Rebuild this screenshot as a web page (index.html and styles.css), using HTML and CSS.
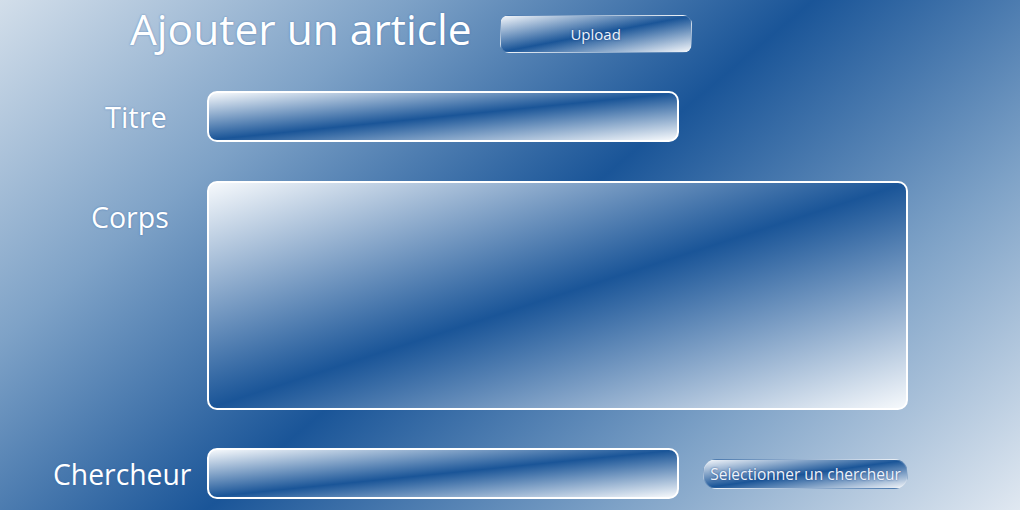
FILE: index.html
```html
<!DOCTYPE html>
<html lang="fr">
<head>
<meta charset="utf-8">
<title>Ajouter un article</title>
<link rel="stylesheet" href="styles.css">
</head>
<body>
<main class="page">
  <header class="header">
    <h1 class="title">Ajouter un article</h1>
    <button class="glass-btn upload-btn" type="button">Upload</button>
  </header>
  <form class="form">
    <div class="row row-titre">
      <label class="label label-titre" for="titre">Titre</label>
      <input class="field field-line" id="titre" type="text">
    </div>
    <div class="row row-corps">
      <label class="label label-corps" for="corps">Corps</label>
      <textarea class="field field-area" id="corps"></textarea>
    </div>
    <div class="row row-chercheur">
      <label class="label label-chercheur" for="chercheur">Chercheur</label>
      <input class="field field-line" id="chercheur" type="text">
      <button class="glass-btn select-btn" type="button">Selectionner un chercheur</button>
    </div>
  </form>
</main>
</body>
</html>
```

FILE: styles.css
```css
* { box-sizing: border-box; }

html, body {
  margin: 0;
  padding: 0;
  width: 1020px;
  height: 510px;
  overflow: hidden;
}

body {
  font-family: "Open Sans", "DejaVu Sans", sans-serif;
  color: #ffffff;
  background: linear-gradient(140deg, #d2deea 0%, #7ea2c7 25%, #1a5598 50%, #7ea2c7 75%, #e0e8f1 100%);
}

.page {
  display: flex;
  flex-direction: column;
  height: 510px;
}

.header {
  display: flex;
  align-items: flex-start;
  height: 91px;
  padding-left: 130px;
}

.title {
  margin: 0;
  font-weight: 400;
  font-size: 42.5px;
  line-height: 58px;
  text-shadow: 0 0 2px rgba(40, 90, 160, 0.6);
}

.glass-btn {
  font-family: "Open Sans", "DejaVu Sans", sans-serif;
  color: #eef3fa;
  border: 1px solid rgba(255, 255, 255, 0.2);
  background: linear-gradient(to bottom right, #f4f7fb 0%, #1a5598 50%, #f4f7fb 100%);
  padding: 0;
  text-shadow: 0 0 2px rgba(20, 60, 130, 0.8);
  cursor: pointer;
}

.upload-btn {
  margin-left: 28px;
  margin-top: 15px;
  width: 192px;
  height: 38px;
  border-radius: 9px;
  font-size: 15px;
}

.form {
  display: flex;
  flex-direction: column;
  gap: 39px;
}

.row {
  display: flex;
  align-items: center;
}

.row-corps {
  align-items: flex-start;
}

.label {
  font-size: 28.5px;
  line-height: 36px;
  text-shadow: 0 0 2px rgba(40, 90, 160, 0.6);
}

.label-titre { width: 207px; padding-left: 105px; font-size: 29px; }
.label-corps { width: 207px; padding-left: 91px; margin-top: 18px; }
.label-chercheur { width: 207px; padding-left: 53px; font-size: 28.3px; }

.field {
  display: block;
  border: 2px solid #ffffff;
  border-radius: 10px;
  background: linear-gradient(to bottom right, #f6f9fc 0%, #1a5598 50%, #f6f9fc 100%);
  color: #ffffff;
  font-family: "Open Sans", "DejaVu Sans", sans-serif;
  font-size: 16px;
  outline: none;
  margin: 0;
}

.field-line {
  width: 472px;
  height: 51px;
}

.field-area {
  width: 701px;
  height: 229px;
  resize: none;
}

.row-chercheur {
  margin-top: -1px;
}

.select-btn {
  margin-left: 24px;
  width: 205px;
  height: 30px;
  border-radius: 14px;
  font-size: 15.5px;
  white-space: nowrap;
}
```
